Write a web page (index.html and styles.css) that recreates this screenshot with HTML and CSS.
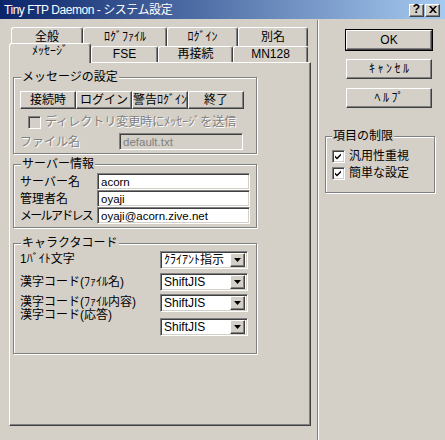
FILE: index.html
```html
<!DOCTYPE html>
<html lang="ja">
<head>
<meta charset="utf-8">
<title>Tiny FTP Daemon - システム設定</title>
<link rel="stylesheet" href="styles.css">
</head>
<body>
<div class="window">
  <div class="titlebar">
    <span class="title">Tiny FTP Daemon - システム設定</span>
    <div class="cap-buttons">
      <span class="cap-btn">?</span>
      <span class="cap-btn"><svg width="8" height="7" viewBox="0 0 8 7"><path d="M0 0H2L4 2.3L6 0H8L5.1 3.5L8 7H6L4 4.7L2 7H0L2.9 3.5Z"/></svg></span>
    </div>
  </div>
  <div class="main">
    <div class="left">
      <div class="tabs">
        <div class="tabrow back">
          <div class="tab t-zenpan">全般</div>
          <div class="tab t-logfile">ﾛｸﾞﾌｧｲﾙ</div>
          <div class="tab t-login">ﾛｸﾞｲﾝ</div>
          <div class="tab t-alias">別名</div>
        </div>
        <div class="tabrow front">
          <div class="tab active t-msg">ﾒｯｾｰｼﾞ</div>
          <div class="tab t-fse">FSE</div>
          <div class="tab t-reconn">再接続</div>
          <div class="tab t-mn">MN128</div>
        </div>
      </div>
      <div class="panel">
        <fieldset class="group msg-group">
          <legend>メッセージの設定</legend>
          <div class="seg-row">
            <button class="btn seg">接続時</button>
            <button class="btn seg">ログイン</button>
            <button class="btn seg">警告ﾛｸﾞｲﾝ</button>
            <button class="btn seg">終了</button>
          </div>
          <div class="check check-dir disabled">
            <span class="box"></span>
            <span class="check-text">ディレクトリ変更時にﾒｯｾｰｼﾞを送信</span>
          </div>
          <div class="file-row">
            <span class="file-label disabled-text">ファイル名</span>
            <span class="input input-file disabled">default.txt</span>
          </div>
        </fieldset>

        <fieldset class="group server-group">
          <legend>サーバー情報</legend>
          <div class="server-row">
            <span class="server-label">サーバー名</span>
            <span class="input input-server">acorn</span>
          </div>
          <div class="server-row">
            <span class="server-label">管理者名</span>
            <span class="input input-server">oyaji</span>
          </div>
          <div class="server-row">
            <span class="server-label tight">メールアドレス</span>
            <span class="input input-server">oyaji@acorn.zive.net</span>
          </div>
        </fieldset>

        <fieldset class="group code-group">
          <legend>キャラクタコード</legend>
          <div class="code-grid">
            <div class="code-labels">
              <span class="code-label l1">1ﾊﾞｲﾄ文字</span>
              <span class="code-label l2">漢字コード(ﾌｧｲﾙ名)</span>
              <span class="code-label l3">漢字コード(ﾌｧｲﾙ内容)</span>
              <span class="code-label l4">漢字コード(応答)</span>
            </div>
            <div class="code-selects">
              <div class="select s1"><span class="select-value">ｸﾗｲｱﾝﾄ指示</span><span class="drop"><svg width="7" height="4" viewBox="0 0 7 4"><path d="M0 0H7L3.5 4Z"/></svg></span></div>
              <div class="select s2"><span class="select-value">ShiftJIS</span><span class="drop"><svg width="7" height="4" viewBox="0 0 7 4"><path d="M0 0H7L3.5 4Z"/></svg></span></div>
              <div class="select s3"><span class="select-value">ShiftJIS</span><span class="drop"><svg width="7" height="4" viewBox="0 0 7 4"><path d="M0 0H7L3.5 4Z"/></svg></span></div>
              <div class="select s4"><span class="select-value">ShiftJIS</span><span class="drop"><svg width="7" height="4" viewBox="0 0 7 4"><path d="M0 0H7L3.5 4Z"/></svg></span></div>
            </div>
          </div>
        </fieldset>
      </div>
    </div>
    <div class="sep"></div>
    <div class="right">
      <button class="btn side default">OK</button>
      <button class="btn side spaced">ｷｬﾝｾﾙ</button>
      <button class="btn side spaced">ﾍﾙﾌﾟ</button>
      <fieldset class="group limit-group">
        <legend>項目の制限</legend>
        <div class="check check-limit">
          <span class="box checked"><svg width="9" height="9" viewBox="0 0 9 9"><path d="M1 3.5L3 5.5L7 1.5V3.5L3 7.5L1 5.5Z"/></svg></span>
          <span class="check-text">汎用性重視</span>
        </div>
        <div class="check check-limit">
          <span class="box checked"><svg width="9" height="9" viewBox="0 0 9 9"><path d="M1 3.5L3 5.5L7 1.5V3.5L3 7.5L1 5.5Z"/></svg></span>
          <span class="check-text">簡単な設定</span>
        </div>
      </fieldset>
    </div>
  </div>
</div>
</body>
</html>
```

FILE: styles.css
```css
* { box-sizing: border-box; }

html, body {
  margin: 0;
  padding: 0;
}

body {
  width: 445px;
  height: 440px;
  overflow: hidden;
  background: #d4d0c8;
  font-family: "Liberation Sans", "Noto Sans CJK JP", sans-serif;
  font-size: 12px;
  color: #000;
}

.window {
  width: 445px;
  height: 440px;
  display: flex;
  flex-direction: column;
}

/* ---------- title bar ---------- */
.titlebar {
  height: 19px;
  flex: none;
  background: linear-gradient(to right, #0a246a, #a6caf0);
  display: flex;
  align-items: center;
  justify-content: space-between;
  padding: 0 5px 0 4px;
}

.title {
  color: #fff;
  font-size: 12px;
  line-height: 14px;
  letter-spacing: -0.45px;
  white-space: nowrap;
}

.cap-buttons {
  display: flex;
  gap: 1px;
  padding-top: 1px;
}

.cap-btn {
  width: 15px;
  height: 13px;
  background: #d4d0c8;
  border: 1px solid;
  border-color: #fff #404040 #404040 #fff;
  box-shadow: inset -1px -1px #808080;
  display: flex;
  align-items: center;
  justify-content: center;
  font-weight: bold;
  font-size: 12px;
  line-height: 11px;
  padding-bottom: 1px;
}

/* ---------- main area ---------- */
.main {
  flex: 1;
  display: flex;
}

.left {
  width: 317px;
  flex: none;
  padding: 8px 0 0 9px;
}

.sep {
  width: 2px;
  flex: none;
  border-left: 1px solid #808080;
  border-right: 1px solid #fff;
  margin-top: 1px;
}

.right {
  flex: 1;
  display: flex;
  flex-direction: column;
  align-items: flex-start;
  padding-top: 11px;
}

/* ---------- tabs ---------- */
.tabrow {
  display: flex;
}

.tabrow.back {
  height: 19px;
  padding-left: 2px;
}

.tabrow.front {
  height: 16px;
}

.tab {
  height: 100%;
  flex: none;
  background: #d4d0c8;
  border: 1px solid;
  border-bottom: 0;
  border-color: #fff #404040 #404040 #fff;
  border-radius: 3px 3px 0 0;
  box-shadow: inset -1px 0 #808080;
  text-align: center;
  line-height: 14px;
  white-space: nowrap;
}

.tabrow.back .tab { padding-top: 2px; }

.tab.active {
  position: relative;
  z-index: 1;
  height: 20px;
  margin-top: -3px;
  margin-bottom: -1px;
}

.t-zenpan { width: 72px; }
.t-logfile { width: 84px; }
.t-login { width: 71px; }
.t-alias { width: 70px; }
.t-msg { width: 82px; }
.t-fse { width: 67px; }
.t-reconn { width: 75px; }
.t-mn { width: 75px; }

/* ---------- tab page ---------- */
.panel {
  width: 302px;
  height: 364px;
  border: 1px solid;
  border-color: #fff #404040 #404040 #fff;
  box-shadow: inset -1px -1px #808080;
  padding: 8px 0 0 3px;
  display: flex;
  flex-direction: column;
  align-items: flex-start;
}

/* ---------- group boxes ---------- */
.group {
  margin: 0;
  min-width: 0;
  padding: 0 0 0 6px;
  border: 1px solid #808080;
  box-shadow: inset 1px 1px #fff, 1px 1px #fff;
}

.group legend {
  margin-left: 1px;
  padding: 0 1px;
  font-size: 12px;
  line-height: 12px;
  background: #d4d0c8;
}

.msg-group {
  width: 244px;
  padding-bottom: 3px;
}

.server-group {
  width: 244px;
  margin-top: 4px;
  padding-bottom: 3px;
}

.code-group {
  width: 244px;
  margin-top: 9px;
  padding-bottom: 17px;
}

.limit-group {
  width: 110px;
  margin-top: 22px;
  margin-left: 6px;
  padding-bottom: 12px;
}

.limit-group legend { margin-left: 0; }

/* ---------- buttons ---------- */
.btn {
  font: inherit;
  font-size: 12px;
  color: #000;
  height: 20px;
  padding: 0;
  background: #d4d0c8;
  border: 1px solid;
  border-color: #fff #404040 #404040 #fff;
  box-shadow: inset -1px -1px #808080;
  line-height: 16px;
  white-space: nowrap;
  overflow: visible;
}

.seg-row {
  display: flex;
  margin-top: 8px;
}

.btn.seg {
  width: 56px;
  height: 18px;
  line-height: 15px;
}

.btn.side {
  width: 86px;
  margin-left: 27px;
  margin-top: 9px;
}

.btn.side.spaced {
  letter-spacing: 2.5px;
  text-indent: 2.5px;
}

.btn.side.default {
  margin-top: 0;
  outline: 1px solid #000;
}

/* ---------- check boxes ---------- */
.check {
  display: flex;
  align-items: center;
  gap: 4px;
  height: 13px;
}

.box {
  width: 13px;
  height: 13px;
  flex: none;
  border: 1px solid;
  border-color: #808080 #fff #fff #808080;
  box-shadow: inset 1px 1px #404040, inset -1px -1px #d4d0c8;
  background: #fff;
  display: flex;
  align-items: center;
  justify-content: center;
}

.check-text {
  line-height: 13px;
  white-space: nowrap;
}

.check-dir {
  margin-top: 7px;
  margin-left: 8px;
}

.check.disabled .box { background: #d4d0c8; }

.check.disabled .check-text,
.disabled-text {
  color: #808080;
  text-shadow: 1px 1px 0 #fff;
}

.check-limit {
  margin-top: 4px;
}

.limit-group legend + .check-limit { margin-top: 8px; }

/* ---------- text fields ---------- */
.input {
  display: block;
  height: 17px;
  border: 1px solid;
  border-color: #808080 #fff #fff #808080;
  box-shadow: inset 1px 1px #404040, inset -1px -1px #d4d0c8;
  background: #fff;
  padding: 1px 0 0 3px;
  font-size: 11.5px;
  line-height: 14px;
  white-space: nowrap;
  overflow: hidden;
}

.input.disabled {
  background: #d4d0c8;
  color: #808080;
}

.file-row {
  display: flex;
  align-items: center;
  margin-top: 4px;
}

.file-label {
  width: 99px;
  line-height: 14px;
}

.input-file { width: 124px; }

.server-group legend + .server-row { margin-top: 3px; }

.server-row {
  display: flex;
  align-items: center;
}

.server-label {
  width: 77px;
  flex: none;
  line-height: 14px;
  white-space: nowrap;
}

.server-label.tight { letter-spacing: -1.7px; }

.input-server { width: 153px; }

/* ---------- character code ---------- */
.code-grid {
  display: grid;
  grid-template-columns: 140px 88px;
}

.code-labels,
.code-selects {
  display: flex;
  flex-direction: column;
  align-items: flex-start;
}

.code-label {
  line-height: 12px;
  white-space: nowrap;
}

.l1 { margin-top: 4px; }
.l2 { margin-top: 11px; }
.l3 { margin-top: 8px; }
.l4 { margin-top: 1px; }

.select {
  width: 88px;
  height: 18px;
  display: flex;
  align-items: center;
  border: 1px solid;
  border-color: #808080 #fff #fff #808080;
  box-shadow: inset 1px 1px #404040, inset -1px -1px #d4d0c8;
  background: #fff;
  padding: 1px 2px 1px 1px;
}

.s1 { margin-top: 2px; }
.s2 { margin-top: 4px; }
.s3 { margin-top: 3px; }
.s4 { margin-top: 6px; }

.select-value {
  flex: 1;
  padding-left: 2px;
  line-height: 14px;
  white-space: nowrap;
  overflow: hidden;
}

.drop {
  width: 15px;
  height: 14px;
  flex: none;
  background: #d4d0c8;
  border: 1px solid;
  border-color: #fff #404040 #404040 #fff;
  box-shadow: inset -1px -1px #808080;
  display: flex;
  align-items: center;
  justify-content: center;
}
```
